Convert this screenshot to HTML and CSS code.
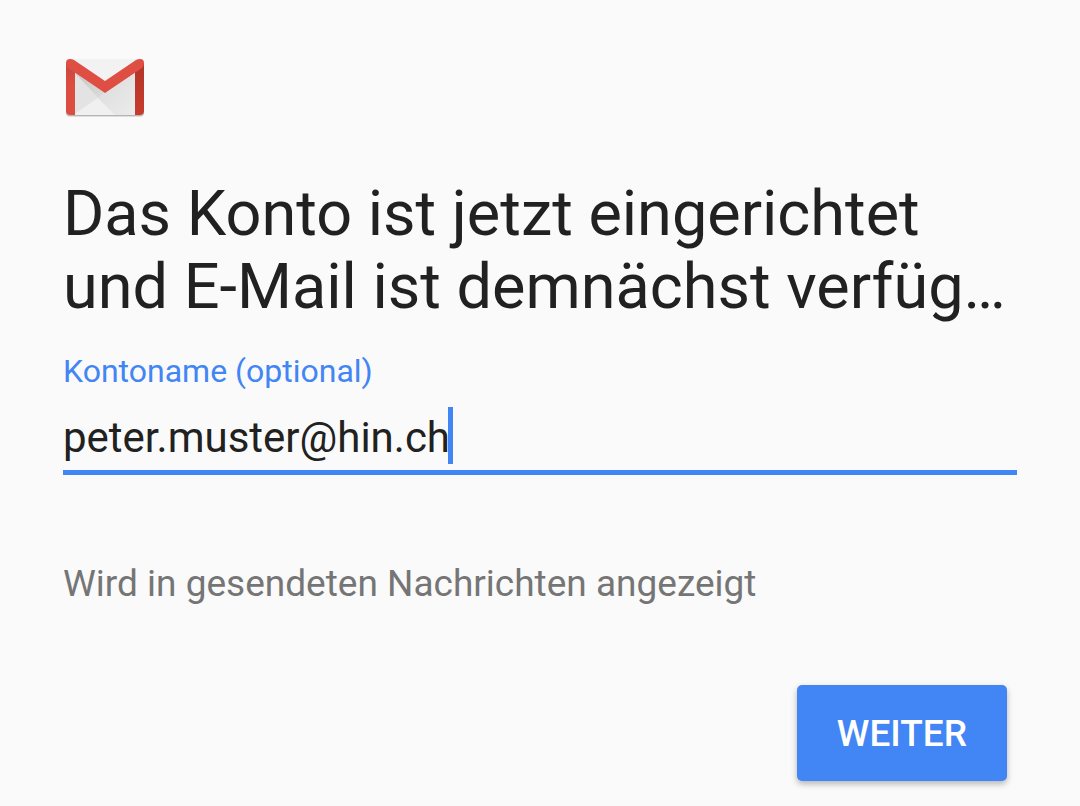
FILE: index.html
```
<!DOCTYPE html>
<html lang="de">
<head>
  <meta charset="UTF-8">
  <meta name="viewport" content="width=device-width, initial-scale=1">
  <title>Konto eingerichtet</title>
  <link rel="stylesheet" href="styles.css">
</head>
<body>
  <main class="setup">
    <svg class="logo" viewBox="0 0 84 64" role="img" aria-label="Gmail">
      <defs>
        <linearGradient id="leftBar" x1="0" y1="0" x2="0" y2="1">
          <stop offset="0" stop-color="#c9473b"/>
          <stop offset="0.4" stop-color="#dc4c40"/>
        </linearGradient>
        <linearGradient id="rightBar" x1="0" y1="0" x2="0" y2="1">
          <stop offset="0" stop-color="#b23428"/>
          <stop offset="1" stop-color="#c83b2d"/>
        </linearGradient>
        <linearGradient id="fold" x1="0" y1="0" x2="1" y2="1">
          <stop offset="0" stop-color="#c6c6c6"/>
          <stop offset="1" stop-color="#dcdcdc"/>
        </linearGradient>
        <linearGradient id="paper" x1="0" y1="0" x2="1" y2="1">
          <stop offset="0" stop-color="#dadada"/>
          <stop offset="1" stop-color="#ececec"/>
        </linearGradient>
      </defs>
      <rect x="3" y="4" width="78" height="57" rx="4" fill="#dedede"/>
      <rect x="3" y="4" width="78" height="56" rx="4" fill="#b5b5b5"/>
      <rect x="3" y="3" width="78" height="56" rx="4" fill="#eeeeee"/>
      <path d="M12 17L35 42L12 58Z" fill="#e3e3e3"/>
      <path d="M12 58L35 42L52 59H12Z" fill="#f0f0f0"/>
      <path d="M12 17L42 37L35 42Z" fill="url(#fold)"/>
      <path d="M72 17L42 37L35 42L52 59H72Z" fill="url(#paper)"/>
      <path d="M10 3H74L42 26Z" fill="#f2f2f2"/>
      <path d="M3 7L12 13V59H7Q3 59 3 55Z" fill="url(#leftBar)"/>
      <path d="M81 7L72 13V59H77Q81 59 81 55Z" fill="url(#rightBar)"/>
      <path d="M3 7Q3 3 7 3Q9 3 11 4L42 25L73 4Q75 3 77 3Q81 3 81 7Q81 10 79 12L42 37L5 12Q3 10 3 7Z" fill="#de4e42"/>
    </svg>

    <h1>Das Konto ist jetzt eingerichtet und E-Mail ist demnächst verfüg…</h1>

    <form>
      <label for="accountName">Kontoname (optional)</label>
      <div class="field">
        <input type="text" id="accountName" value="peter.muster@hin.ch" spellcheck="false">
        <span class="cursor"></span>
      </div>
      <p class="hint">Wird in gesendeten Nachrichten angezeigt</p>
      <div class="actions">
        <button type="button">WEITER</button>
      </div>
    </form>
  </main>
</body>
</html>
```

FILE: styles.css
```
* {
  box-sizing: border-box;
}

body {
  margin: 0;
  background: #fafafa;
  color: #212121;
  font-family: Roboto, "Liberation Sans", sans-serif;
}

.setup {
  padding: 56px 63px 24px;
}

.logo {
  display: block;
  width: 84px;
  height: 64px;
}

h1 {
  margin: 57px 0 28px;
  font-size: 63px;
  font-weight: 400;
  line-height: 73px;
}

label {
  display: block;
  color: #4285f4;
  font-size: 32px;
  line-height: 40px;
}

.field {
  display: flex;
  margin-top: 16px;
  padding-bottom: 3px;
  border-bottom: 5px solid #4285f4;
}

input {
  field-sizing: content;
  height: 60px;
  padding: 0;
  border: none;
  outline: none;
  background: none;
  color: #212121;
  font-family: inherit;
  font-size: 42px;
  caret-color: transparent;
}

.cursor {
  width: 5px;
  height: 57px;
  margin-left: -2px;
  background: #4285f4;
}

.hint {
  margin: 87px 0 79px;
  color: #757575;
  font-size: 37px;
  line-height: 44px;
}

.actions {
  display: flex;
  justify-content: flex-end;
  padding-right: 10px;
}

button {
  height: 96px;
  padding: 0 40px;
  border: none;
  border-radius: 5px;
  background: #4285f4;
  box-shadow: 0 3px 6px rgba(0, 0, 0, 0.28);
  color: #fff;
  font-family: inherit;
  font-size: 37px;
  font-weight: 500;
  cursor: pointer;
}
```
